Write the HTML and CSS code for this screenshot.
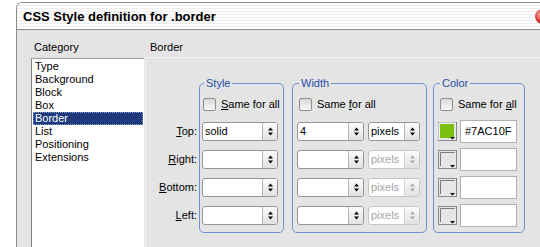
FILE: index.html
```html
<!DOCTYPE html>
<html lang="en">
<head>
  <meta charset="utf-8">
  <title>CSS Style definition for .border</title>
  <link rel="stylesheet" href="styles.css">
</head>
<body>

  <div class="dialog">
    <div class="titlebar">
      <span class="title">CSS Style definition for .border</span>
      <span class="close"></span>
    </div>

    <div class="content">
      <div class="catcol">
        <div class="head">Category</div>
        <ul class="catlist">
          <li>Type</li>
          <li>Background</li>
          <li>Block</li>
          <li>Box</li>
          <li class="sel">Border</li>
          <li>List</li>
          <li>Positioning</li>
          <li>Extensions</li>
        </ul>
      </div>

      <div class="maincol">
        <div class="head">Border</div>
        <div class="panel">
          <div class="rowlabels">
            <label><u>T</u>op:</label>
            <label><u>R</u>ight:</label>
            <label><u>B</u>ottom:</label>
            <label><u>L</u>eft:</label>
          </div>

          <fieldset class="fs-style">
            <legend>Style</legend>
            <label class="same"><input type="checkbox"><span><u>S</u>ame for all</span></label>
            <div class="rows">
              <div class="combo w-style"><span class="val">solid</span><span class="spin"><svg width="5" height="9" viewBox="0 0 5 9"><polygon points="0,3.5 2.5,0.5 5,3.5"/><polygon points="0,5.5 5,5.5 2.5,8.5"/></svg></span></div>
              <div class="combo w-style"><span class="val"></span><span class="spin"><svg width="5" height="9" viewBox="0 0 5 9"><polygon points="0,3.5 2.5,0.5 5,3.5"/><polygon points="0,5.5 5,5.5 2.5,8.5"/></svg></span></div>
              <div class="combo w-style"><span class="val"></span><span class="spin"><svg width="5" height="9" viewBox="0 0 5 9"><polygon points="0,3.5 2.5,0.5 5,3.5"/><polygon points="0,5.5 5,5.5 2.5,8.5"/></svg></span></div>
              <div class="combo w-style"><span class="val"></span><span class="spin"><svg width="5" height="9" viewBox="0 0 5 9"><polygon points="0,3.5 2.5,0.5 5,3.5"/><polygon points="0,5.5 5,5.5 2.5,8.5"/></svg></span></div>
            </div>
          </fieldset>

          <fieldset class="fs-width">
            <legend>Width</legend>
            <label class="same"><input type="checkbox"><span>Same <u>f</u>or all</span></label>
            <div class="rows">
              <div class="row">
                <div class="combo w-num"><span class="val">4</span><span class="spin"><svg width="5" height="9" viewBox="0 0 5 9"><polygon points="0,3.5 2.5,0.5 5,3.5"/><polygon points="0,5.5 5,5.5 2.5,8.5"/></svg></span></div>
                <div class="combo w-unit"><span class="val">pixels</span><span class="spin"><svg width="5" height="9" viewBox="0 0 5 9"><polygon points="0,3.5 2.5,0.5 5,3.5"/><polygon points="0,5.5 5,5.5 2.5,8.5"/></svg></span></div>
              </div>
              <div class="row">
                <div class="combo w-num"><span class="val"></span><span class="spin"><svg width="5" height="9" viewBox="0 0 5 9"><polygon points="0,3.5 2.5,0.5 5,3.5"/><polygon points="0,5.5 5,5.5 2.5,8.5"/></svg></span></div>
                <div class="combo w-unit off"><span class="val">pixels</span><span class="spin"><svg width="5" height="9" viewBox="0 0 5 9"><polygon points="0,3.5 2.5,0.5 5,3.5"/><polygon points="0,5.5 5,5.5 2.5,8.5"/></svg></span></div>
              </div>
              <div class="row">
                <div class="combo w-num"><span class="val"></span><span class="spin"><svg width="5" height="9" viewBox="0 0 5 9"><polygon points="0,3.5 2.5,0.5 5,3.5"/><polygon points="0,5.5 5,5.5 2.5,8.5"/></svg></span></div>
                <div class="combo w-unit off"><span class="val">pixels</span><span class="spin"><svg width="5" height="9" viewBox="0 0 5 9"><polygon points="0,3.5 2.5,0.5 5,3.5"/><polygon points="0,5.5 5,5.5 2.5,8.5"/></svg></span></div>
              </div>
              <div class="row">
                <div class="combo w-num"><span class="val"></span><span class="spin"><svg width="5" height="9" viewBox="0 0 5 9"><polygon points="0,3.5 2.5,0.5 5,3.5"/><polygon points="0,5.5 5,5.5 2.5,8.5"/></svg></span></div>
                <div class="combo w-unit off"><span class="val">pixels</span><span class="spin"><svg width="5" height="9" viewBox="0 0 5 9"><polygon points="0,3.5 2.5,0.5 5,3.5"/><polygon points="0,5.5 5,5.5 2.5,8.5"/></svg></span></div>
              </div>
            </div>
          </fieldset>

          <fieldset class="fs-color">
            <legend>Color</legend>
            <label class="same"><input type="checkbox"><span>Same for <u>a</u>ll</span></label>
            <div class="rows">
              <div class="row">
                <svg class="swatch" width="19" height="19" viewBox="0 0 19 19"><rect x="0.5" y="0.5" width="18" height="18" fill="#e6e6e6" stroke="#8a8a8a"/><path d="M1 18V1h17" fill="none" stroke="#fafafa"/><rect x="2" y="2" width="14" height="14" fill="#7ac10f"/><polygon points="12,15 17,15 14.5,17.5"/></svg>
                <span class="hex">#7AC10F</span>
              </div>
              <div class="row">
                <svg class="swatch" width="19" height="19" viewBox="0 0 19 19"><rect x="0.5" y="0.5" width="18" height="18" fill="#e6e6e6" stroke="#8a8a8a"/><path d="M2.5 16V2.5h14" fill="none" stroke="#7a7a7a"/><polygon points="12,15 17,15 14.5,17.5"/></svg>
                <span class="hex"></span>
              </div>
              <div class="row">
                <svg class="swatch" width="19" height="19" viewBox="0 0 19 19"><rect x="0.5" y="0.5" width="18" height="18" fill="#e6e6e6" stroke="#8a8a8a"/><path d="M2.5 16V2.5h14" fill="none" stroke="#7a7a7a"/><polygon points="12,15 17,15 14.5,17.5"/></svg>
                <span class="hex"></span>
              </div>
              <div class="row">
                <svg class="swatch" width="19" height="19" viewBox="0 0 19 19"><rect x="0.5" y="0.5" width="18" height="18" fill="#e6e6e6" stroke="#8a8a8a"/><path d="M2.5 16V2.5h14" fill="none" stroke="#7a7a7a"/><polygon points="12,15 17,15 14.5,17.5"/></svg>
                <span class="hex"></span>
              </div>
            </div>
          </fieldset>
        </div>
      </div>
    </div>
  </div>

</body>
</html>
```

FILE: styles.css
```css
* {
  box-sizing: border-box;
}

html,
body {
  margin: 0;
  overflow: hidden;
}

body {
  background-color: #fff;
  font-family: "Liberation Sans", Arial, sans-serif;
  font-size: 11px;
  color: #000;
}

.dialog {
  width: 544px;
  height: 245px;
  margin: 2px 0 0 16px;
  border: 1px solid #8a8a8a;
  border-right: 0;
  border-bottom: 0;
  border-top-left-radius: 6px;
  background-color: #e4e4e4;
  overflow: hidden;
}

.titlebar {
  height: 27px;
  display: flex;
  align-items: center;
  padding: 1px 10px 0 6px;
  border-bottom: 1px solid #8c8c8c;
  background: repeating-linear-gradient(#fdfdfd 0 2px, #eeeeee 2px 3px);
}

.title {
  flex: 1;
  font-size: 13px;
  font-weight: bold;
}

.close {
  width: 15px;
  height: 15px;
  border-radius: 50%;
  background: radial-gradient(circle at 40% 35%, #f6b0a8, #d8302a 55%, #8c1410);
}

.content {
  display: flex;
}

.head {
  height: 27px;
  padding-top: 11px;
  line-height: 13px;
}

/* category list */
.catcol {
  width: 128px;
  padding-left: 14px;
}

.catcol .head {
  padding-left: 3px;
}

.catlist {
  list-style: none;
  margin: 1px 0 0;
  padding: 1px;
  width: 113px;
  height: 189px;
  background-color: #fff;
  border-left: 1px solid #808080;
  border-top: 1px solid #a0a0a0;
}

.catlist li {
  line-height: 13px;
  padding-left: 2px;
}

.catlist .sel {
  background-color: #1d3a7c;
  color: #fff;
  outline: 1px dotted #8a9cc8;
  outline-offset: -1px;
}

/* right side */
.maincol {
  flex: 1;
}

.maincol .head {
  padding-left: 5px;
}

.panel {
  display: flex;
  align-items: flex-start;
  height: 190px;
  padding-top: 19px;
  border-top: 1px solid #f4f4f4;
  border-left: 1px solid #f4f4f4;
}

.rowlabels {
  width: 53px;
  margin-top: 45px;
  padding-right: 2px;
  display: flex;
  flex-direction: column;
  gap: 9px;
  text-align: right;
}

.rowlabels label {
  line-height: 19px;
}

fieldset {
  margin: 0;
  padding: 0 4px 7px;
  border: 1px solid #6b93cd;
  border-radius: 5px;
  min-width: 0;
}

legend {
  padding: 0 2px;
  margin-left: 2px;
  line-height: 13px;
  color: #1f4fa6;
}

.fs-style {
  width: 85px;
  padding-left: 2px;
}

.fs-width {
  width: 135px;
  margin-left: 8px;
}

.fs-color {
  width: 92px;
  margin-left: 6px;
}

.same {
  display: flex;
  align-items: center;
  height: 18px;
  margin-top: 5px;
  white-space: nowrap;
}

.same input {
  flex: none;
  appearance: none;
  width: 13px;
  height: 13px;
  margin: 0 5px 0 2px;
  border: 1px solid #8e8e8e;
  border-radius: 2px;
  background: linear-gradient(#d8d8d8, #f8f8f8);
}

.fs-style .same input {
  margin-left: 1px;
}

.rows {
  margin-top: 9px;
  display: flex;
  flex-direction: column;
  gap: 9px;
}

.row {
  display: flex;
  align-items: center;
  height: 19px;
  gap: 4px;
}

.combo {
  display: flex;
  height: 19px;
  border: 1px solid #959595;
  border-radius: 3px;
  background-color: #fff;
  overflow: hidden;
}

.combo .val {
  flex: 1;
  padding-left: 2px;
  line-height: 17px;
}

.combo .spin {
  width: 15px;
  display: flex;
  align-items: center;
  justify-content: center;
  border-left: 1px solid #b4b4b4;
  background: linear-gradient(#fbfbfb, #e2e2e2);
}

.combo.off {
  border-color: #c6c6c6;
  color: #a4a4a4;
}

.combo.off .spin {
  border-left-color: #d6d6d6;
  fill: #a8a8a8;
}

.w-style {
  width: 76px;
}

.w-num {
  width: 67px;
}

.w-unit {
  width: 52px;
}

.fs-color .row {
  gap: 3px;
}

.swatch {
  flex: none;
}

.hex {
  width: 57px;
  height: 23px;
  padding-left: 4px;
  line-height: 21px;
  border: 1px solid #b0b0b0;
  background-color: #fff;
}
```
